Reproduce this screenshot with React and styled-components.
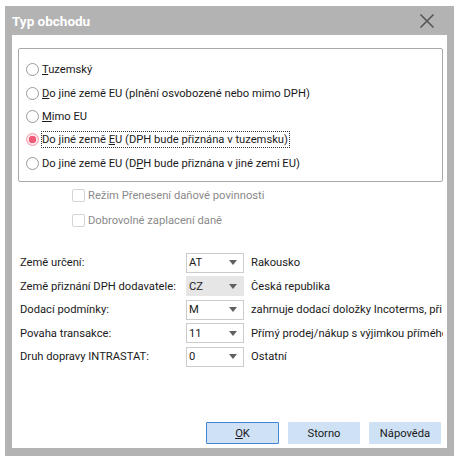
import React from 'react';
import styled, { createGlobalStyle } from 'styled-components';

const GlobalStyle = createGlobalStyle`
  html, body {
    margin: 0;
    padding: 0;
    background: #ffffff;
  }
  body {
    font-family: Roboto, 'Liberation Sans', sans-serif;
    font-size: 11.2px;
    color: #1a1a1a;
  }
`;

const radios = [
  { pre: '', key: 'T', post: 'uzemský' },
  { pre: '', key: 'D', post: 'o jiné země EU (plnění osvobozené nebo mimo DPH)' },
  { pre: '', key: 'M', post: 'imo EU' },
  { pre: 'Do jiné země ', key: 'E', post: 'U (DPH bude přiznána v tuzemsku)', checked: true },
  { pre: 'Do jiné země EU (D', key: 'P', post: 'H bude přiznána v jiné zemi EU)' },
];

const fields = [
  { label: 'Země určení:', code: 'AT', text: 'Rakousko' },
  { label: 'Země přiznání DPH dodavatele:', code: 'CZ', text: 'Česká republika', disabled: true },
  { label: 'Dodací podmínky:', code: 'M', text: 'zahrnuje dodací doložky Incoterms, při k' },
  { label: 'Povaha transakce:', code: '11', text: 'Přímý prodej/nákup s výjimkou přímého o' },
  { label: 'Druh dopravy INTRASTAT:', code: '0', text: 'Ostatní' },
];

const App = () => {
  return (
    <>
      <GlobalStyle />
      <Window>
        <TitleBar>
          <Title>Typ obchodu</Title>
          <Close viewBox='0 0 16 16'>
            <path d='M1.5 1.5 L14.5 14.5 M14.5 1.5 L1.5 14.5' />
          </Close>
        </TitleBar>
        <Content>
          <GroupBox>
            {radios.map((r, i) => (
              <RadioRow key={i}>
                <Radio $checked={r.checked} />
                <RadioLabel $focused={r.checked}>
                  {r.pre}
                  <u>{r.key}</u>
                  {r.post}
                </RadioLabel>
              </RadioRow>
            ))}
          </GroupBox>
          <Checks>
            <CheckRow>
              <Check />
              <CheckLabel>Režim Přenesení daňové povinnosti</CheckLabel>
            </CheckRow>
            <CheckRow>
              <Check />
              <CheckLabel>Dobrovolné zaplacení daně</CheckLabel>
            </CheckRow>
          </Checks>
          <Form>
            {fields.map((f) => (
              <FieldRow key={f.label}>
                <FieldLabel>{f.label}</FieldLabel>
                <Combo $disabled={f.disabled}>
                  <span>{f.code}</span>
                  <Arrow />
                </Combo>
                <FieldText>{f.text}</FieldText>
              </FieldRow>
            ))}
          </Form>
          <Buttons>
            <Button $default>
              <u>O</u>K
            </Button>
            <Button>Storno</Button>
            <Button>Nápověda</Button>
          </Buttons>
        </Content>
      </Window>
    </>
  );
};

const Window = styled.div`
  margin: 6px 0 0 5px;
  width: 449px;
  height: 450px;
  box-sizing: border-box;
  background: #b3b3b3;
  padding: 0 7px 8px 7px;
  display: flex;
  flex-direction: column;
`;

const TitleBar = styled.div`
  height: 29px;
  display: flex;
  align-items: center;
  justify-content: space-between;
  padding: 0 12px 0 0;
`;

const Title = styled.div`
  color: #ffffff;
  font-weight: 700;
  font-size: 13.5px;
  padding-top: 1px;
`;

const Close = styled.svg`
  width: 16px;
  height: 16px;
  fill: none;
  stroke: #555555;
  stroke-width: 1.6;
`;

const Content = styled.div`
  flex: 1;
  background: #ffffff;
  display: flex;
  flex-direction: column;
  padding: 13px 4px 4px 6px;
`;

const GroupBox = styled.div`
  height: 134px;
  box-sizing: border-box;
  border: 1px solid #a9a9a9;
  border-radius: 2px;
  padding: 9px 0 0 7px;
  display: flex;
  flex-direction: column;
`;

const RadioRow = styled.div`
  height: 23.4px;
  display: flex;
  align-items: center;
`;

const Radio = styled.span`
  width: 13px;
  height: 13px;
  box-sizing: border-box;
  border-radius: 50%;
  border: 1px solid ${({ $checked }) => ($checked ? '#f29aa9' : '#9a9a9a')};
  background: ${({ $checked }) =>
    $checked ? 'radial-gradient(circle, #f05a78 0 3.5px, #fde2e7 4px)' : '#ffffff'};
  margin-right: 3px;
  flex-shrink: 0;
`;

const RadioLabel = styled.span`
  outline: ${({ $focused }) => ($focused ? '1px dotted #333' : 'none')};
  outline-offset: 0;
  line-height: 15px;
  padding: 0 1px 0 0;
`;

const Checks = styled.div`
  display: flex;
  flex-direction: column;
  padding: 1px 0 0 54px;
`;

const CheckRow = styled.div`
  height: 25px;
  display: flex;
  align-items: center;
`;

const Check = styled.span`
  width: 13px;
  height: 13px;
  box-sizing: border-box;
  border: 1px solid #d4d4d4;
  border-radius: 2px;
  margin-right: 3px;
`;

const CheckLabel = styled.span`
  color: #8a8a8a;
`;

const Form = styled.div`
  display: flex;
  flex-direction: column;
  padding: 18px 0 0 2px;
`;

const FieldRow = styled.div`
  height: 23.5px;
  display: flex;
  align-items: center;
  overflow: hidden;
  white-space: nowrap;
`;

const FieldLabel = styled.span`
  width: 166px;
  flex-shrink: 0;
`;

const Combo = styled.div`
  width: 58px;
  height: 20px;
  flex-shrink: 0;
  box-sizing: border-box;
  border: 1px solid ${({ $disabled }) => ($disabled ? '#e6e6e6' : '#cccccc')};
  background: ${({ $disabled }) => ($disabled ? '#e6e6e6' : '#ffffff')};
  display: flex;
  align-items: center;
  justify-content: space-between;
  padding: 0 6px 0 2px;
  margin-right: 7px;
`;

const Arrow = styled.span`
  width: 0;
  height: 0;
  border-left: 4.5px solid transparent;
  border-right: 4.5px solid transparent;
  border-top: 5px solid #606060;
`;

const FieldText = styled.span`
  overflow: hidden;
`;

const Buttons = styled.div`
  margin-top: auto;
  display: flex;
  justify-content: flex-end;
  gap: 9px;
  padding-right: 2px;
`;

const Button = styled.button`
  width: ${({ $default }) => ($default ? '73px' : '72px')};
  height: 22px;
  font: inherit;
  color: #1a1a1a;
  background: #cfe1f4;
  border: 1px solid ${({ $default }) => ($default ? '#3d86d6' : '#cfe1f4')};
  border-radius: 1px;
  padding: 0;
`;

export default App;
